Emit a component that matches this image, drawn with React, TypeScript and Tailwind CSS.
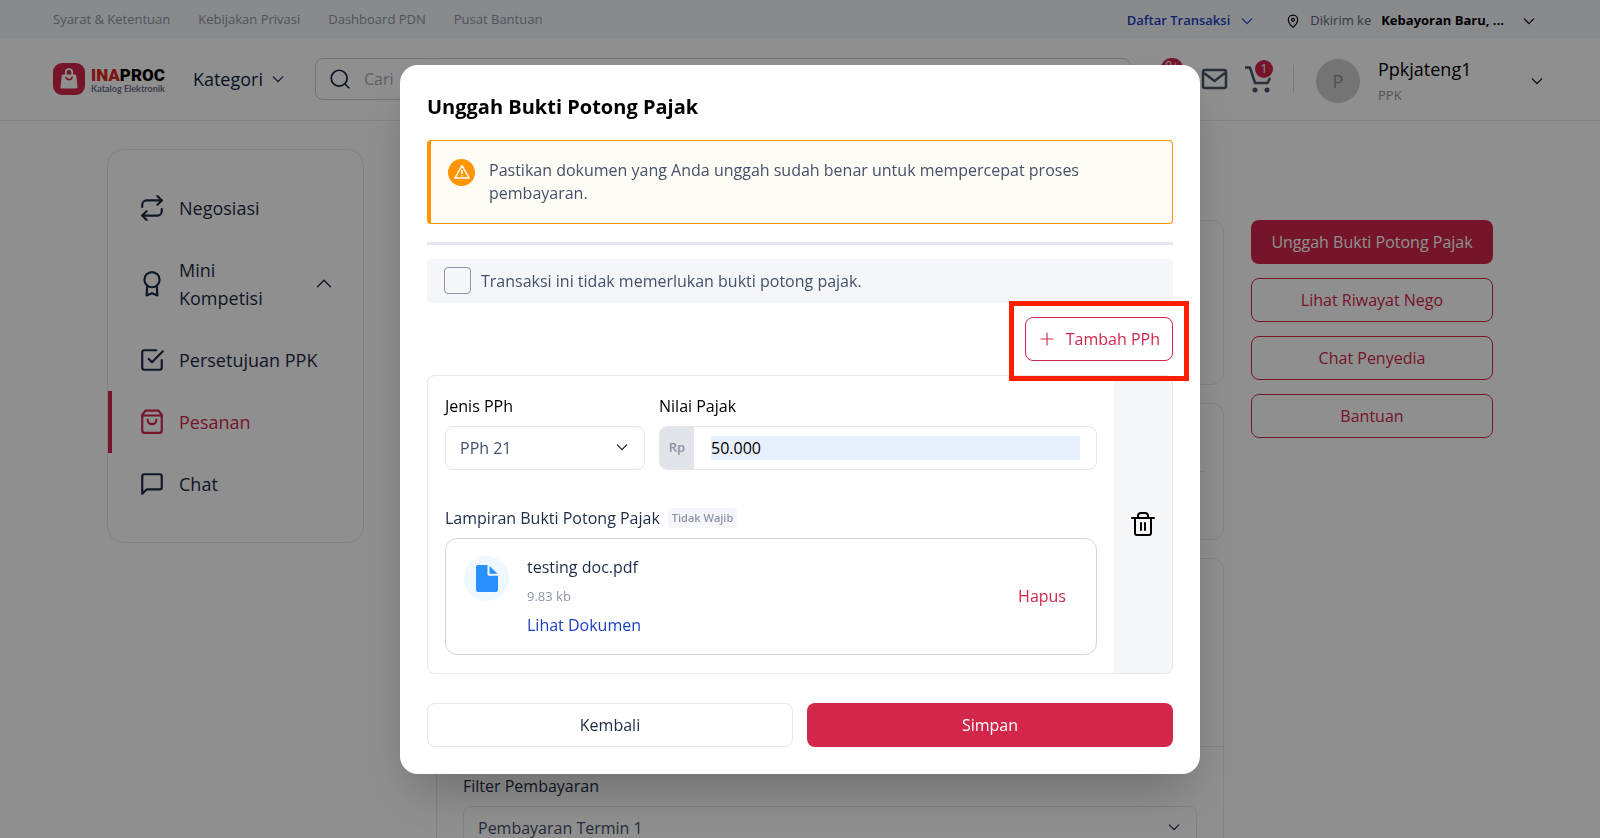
import React, { useState } from "react";

type IconProps = {
  className?: string;
  strokeWidth?: number;
  children: React.ReactNode;
};
function Icon({ className, strokeWidth = 2, children }: IconProps) {
  return (
    <svg
      viewBox="0 0 24 24"
      fill="none"
      stroke="currentColor"
      strokeWidth={strokeWidth}
      strokeLinecap="round"
      strokeLinejoin="round"
      aria-hidden="true"
      className={`shrink-0 ${className || ""}`}
    >
      {children}
    </svg>
  );
}

function ChevronDown({ className }: { className?: string }) {
  return (
    <Icon className={className}>
      <path d="m4 8.500 8 8 8-8" />
    </Icon>
  );
}

function Logo() {
  return (
    <a href="#" className="flex items-center gap-1.5">
      <svg viewBox="0 0 32 32" className="size-8 shrink-0" aria-hidden="true">
        <rect width="32" height="32" rx="9" fill="#d2264b" />
        <path
          d="M10 11.500h12c.7 0 1.100.4 1.200 1.100l1.300 11.500c.1.900-.4 1.400-1.300 1.400H8.800c-.9 0-1.400-.5-1.300-1.400l1.300-11.500c.1-.7.5-1.100 1.200-1.100z"
          fill="#fff"
        />
        <path
          d="M12.800 12V9.300a3.200 3.200 0 0 1 6.400 0V12"
          fill="none"
          stroke="#fff"
          strokeWidth="1.800"
        />
        <path
          d="M13 14.200a3.200 3.200 0 0 0 6.200 0"
          fill="none"
          stroke="#d2264b"
          strokeWidth="1.500"
          strokeLinecap="round"
        />
      </svg>
      <span className="flex flex-col">
        <span className="font-['Roboto',sans-serif] text-[17px] leading-5 font-black text-black">
          <span className="text-[#e1251b]">INA</span>PROC
        </span>
        <span className="font-['Lato',sans-serif] text-[9px] leading-2 font-bold text-gray-500">
          Katalog Elektronik
        </span>
      </span>
    </a>
  );
}

function TopBar() {
  return (
    <div className="flex h-[38px] items-center justify-between bg-[#f4f6fa] pr-16 pl-[53px] text-[13px] text-[#8d95a5]">
      <nav className="flex gap-7 pt-px">
        <a href="#">Syarat &amp; Ketentuan</a>
        <a href="#">Kebijakan Privasi</a>
        <a href="#">Dashboard PDN</a>
        <a href="#">Pusat Bantuan</a>
      </nav>
      <div className="flex items-center pt-1">
        <button className="flex items-center gap-2.5 font-semibold text-[#1b3fc4]">
          Daftar Transaksi
          <ChevronDown className="size-3.5" />
        </button>
        <button className="ml-8 flex items-center gap-2.5 text-[#596579]">
          <Icon className="size-3.5 text-black">
            <path d="M20 10c0 6-8 13-8 13s-8-7-8-13a8 8 0 0 1 16 0z" />
            <circle cx="12" cy="10" r="2.500" />
          </Icon>
          Dikirim ke
          <span className="font-bold text-black">Kebayoran Baru, ...</span>
          <ChevronDown className="ml-2 size-3.5 text-black" />
        </button>
      </div>
    </div>
  );
}

function Header() {
  return (
    <header className="flex h-[83px] items-center border-b border-gray-200 pr-14 pl-[53px]">
      <Logo />
      <button className="ml-7 flex items-center gap-2 text-lg font-medium text-[#0b1f3f]">
        Kategori
        <ChevronDown className="size-3.5" />
      </button>
      <label className="ml-[30px] flex h-[42px] flex-1 items-center gap-3.5 rounded-lg border border-[#c9ced6] px-3.5 text-[#0b1f3f]">
        <Icon className="size-5">
          <circle cx="11" cy="11" r="9.500" />
          <path d="m22.500 22.500-4.500-4.500" />
        </Icon>
        <input
          type="search"
          aria-label="Cari"
          placeholder="Cari"
          className="w-full text-base outline-none placeholder:text-[#a3abb9]"
        />
      </label>
      <div className="ml-[70px] flex items-center gap-4 pt-0.5 text-[#4a5568]">
        <button aria-label="Pesan" className="relative">
          <svg viewBox="0 0 28 28" className="size-7" fill="none" aria-hidden="true">
            <rect x="2" y="4" width="23" height="18" rx="2" stroke="currentColor" strokeWidth="2.500" />
            <path d="m3 7 10.500 8L24 7" stroke="currentColor" strokeWidth="2.500" />
          </svg>
          <span className="absolute -top-2 -left-10 h-5 w-[22px] rounded-full bg-[#d2264b] text-xs text-white">
            9+
          </span>
        </button>
        <button aria-label="Keranjang" className="relative">
          <svg viewBox="0 0 28 28" className="size-7" fill="none" aria-hidden="true">
            <path
              d="M0 1.500h5l5 15.500H22.500L25 12"
              stroke="currentColor"
              strokeWidth="2.500"
              strokeLinejoin="round"
            />
            <circle cx="10" cy="24" r="2.500" fill="currentColor" />
            <circle cx="22" cy="24" r="2.500" fill="currentColor" />
          </svg>
          <span className="absolute -top-1.5 left-2.5 size-[18px] rounded-full bg-[#d2264b] text-xs leading-[18px] text-white">
            1
          </span>
        </button>
      </div>
      <div className="ml-5 h-7 border-l border-gray-300" />
      <button className="ml-[22px] flex items-center pt-1 text-left">
        <span className="flex size-11 items-center justify-center rounded-full bg-[#cfcfcf] text-lg font-medium text-[#8f8f8f]">
          P
        </span>
        <span className="ml-[18px] flex w-[152px] flex-col">
          <span className="text-lg leading-7 font-medium text-black">
            Ppkjateng1
          </span>
          <span className="text-[13px] leading-6 text-[#8d95a5]">PPK</span>
        </span>
        <ChevronDown className="size-3.5 text-black" />
      </button>
    </header>
  );
}

type MenuItem = {
  label: string;
  icon: React.ReactNode;
  active?: boolean;
  expandable?: boolean;
};
const MENU: MenuItem[] = [
  {
    label: "Negosiasi",
    icon: (
      <>
        <path d="m17 1 4 4-4 4" />
        <path d="M3 11V9a4 4 0 0 1 4-4h14" />
        <path d="m7 23-4-4 4-4" />
        <path d="M21 13v2a4 4 0 0 1-4 4H3" />
      </>
    ),
  },
  {
    label: "Mini Kompetisi",
    expandable: true,
    icon: (
      <>
        <circle cx="12" cy="8" r="7" />
        <path d="M7.500 14.500 7 22.500l5-2 5 2-.5-8" />
      </>
    ),
  },
  {
    label: "Persetujuan PPK",
    icon: (
      <>
        <path d="m9 11 3 3L22 4" />
        <path d="M21 12v7a2 2 0 0 1-2 2H5a2 2 0 0 1-2-2V5a2 2 0 0 1 2-2h11" />
      </>
    ),
  },
  {
    label: "Pesanan",
    active: true,
    icon: (
      <>
        <path d="M6 1.500h12L21 5.500V20a2 2 0 0 1-2 2H5a2 2 0 0 1-2-2V5.500z" />
        <path d="M3 6h18" />
        <path d="M16 10a4 4 0 0 1-8 0" />
      </>
    ),
  },
  {
    label: "Chat",
    icon: (
      <path d="M21 15a2 2 0 0 1-2 2H7l-4 4V5a2 2 0 0 1 2-2h14a2 2 0 0 1 2 2z" />
    ),
  },
];

function Sidebar() {
  return (
    <nav className="w-[257px] rounded-2xl border border-gray-200 py-[27px]">
      {MENU.map(({ label, icon, active, expandable }) => (
        <a
          key={label}
          href="#"
          className={`flex items-center gap-3.5 border-l-4 py-[17px] pr-7 pl-[27px] text-lg leading-7 font-medium ${
            active
              ? "border-[#d2264b] text-[#d2264b]"
              : "border-transparent text-[#1c2b46]"
          }`}
        >
          <Icon className="size-[26px]">{icon}</Icon>
          <span className={expandable ? "w-24" : "whitespace-nowrap"}>
            {label}
          </span>
          {expandable && (
            <Icon className="ml-auto size-[22px]" strokeWidth={1.5}>
              <path d="m5 15 7-7 7 7" />
            </Icon>
          )}
        </a>
      ))}
    </nav>
  );
}

function OrderDetail() {
  return (
    <div className="flex min-w-0 flex-1 flex-col gap-[18px] pt-[71px]">
      <section className="h-[165px] rounded-xl border border-gray-200" />
      <section className="h-[137px] rounded-xl border border-gray-200 px-[18px] pt-[67px]">
        <hr className="border-gray-200" />
      </section>
      <section className="rounded-xl border border-gray-200">
        <div className="h-[188px] border-b border-gray-200" />
        <div className="flex flex-col gap-2 px-[26px] py-[27px]">
          <label
            htmlFor="filter"
            className="text-base leading-6 font-medium text-[#1c2b46]"
          >
            Filter Pembayaran
          </label>
          <div className="relative">
            <select
              id="filter"
              className="h-11 w-full appearance-none rounded-lg border border-gray-200 px-3.5 text-base text-[#44516a]"
            >
              <option>Pembayaran Termin 1</option>
            </select>
            <ChevronDown className="pointer-events-none absolute top-3.5 right-4 size-3.5 text-[#0b1f3f]" />
          </div>
        </div>
      </section>
    </div>
  );
}

function Actions() {
  return (
    <div className="flex w-[242px] flex-col gap-3.5 pt-[71px] text-base font-medium">
      <button className="h-11 rounded-lg bg-[#d2264b] text-white">
        Unggah Bukti Potong Pajak
      </button>
      {["Lihat Riwayat Nego", "Chat Penyedia", "Bantuan"].map((label) => (
        <button
          key={label}
          className="h-11 rounded-lg border border-[#d2264b] text-[#d2264b]"
        >
          {label}
        </button>
      ))}
    </div>
  );
}

function Alert() {
  return (
    <div className="flex items-start gap-3.5 rounded-[4px] border border-l-4 border-[#ff9500] bg-[#fffcf5] py-[18px] pr-10 pl-[17px]">
      <span className="flex size-[27px] shrink-0 items-center justify-center rounded-full bg-[#ff9500] text-white">
        <Icon className="size-[18px]">
          <path d="M12 3.500 2.500 20h19z" />
          <path d="M12 10v4M12 17v.1" />
        </Icon>
      </span>
      <p className="text-base leading-[23px] text-[#44516a]">
        Pastikan dokumen yang Anda unggah sudah benar untuk mempercepat proses
        pembayaran.
      </p>
    </div>
  );
}

function Attachment() {
  return (
    <div className="flex items-center rounded-xl border border-[#d0d5db] py-3.5 pr-[30px] pl-[18px]">
      <span className="mt-[3px] flex size-[45px] items-center justify-center self-start rounded-full bg-[#eff8ff]">
        <svg viewBox="0 0 22 27" className="h-[27px] w-[22px]" aria-hidden="true">
          <path
            d="M2 0h9.500v9.500c0 .8.400 1.200 1.200 1.200H22V25a2 2 0 0 1-2 2H2a2 2 0 0 1-2-2V2a2 2 0 0 1 2-2z"
            fill="#2990fb"
          />
          <path d="M13.500 1 21.500 8.700h-8z" fill="#2990fb" />
        </svg>
      </span>
      <div className="ml-[18px] flex flex-1 flex-col items-start">
        <span className="text-base leading-[29px] font-medium text-[#1c2b46]">
          testing doc.pdf
        </span>
        <span className="text-[13px] leading-[29px] text-[#8d95a5]">
          9.83 kb
        </span>
        <a
          href="#"
          className="text-base leading-[29px] font-medium text-[#1b3fc4]"
        >
          Lihat Dokumen
        </a>
      </div>
      <button className="text-base font-medium text-[#d2264b]">Hapus</button>
    </div>
  );
}

function TaxEntry() {
  const [amount, setAmount] = useState("50.000");

  return (
    <div className="mt-3.5 flex overflow-hidden rounded-lg border border-gray-200">
      <div className="flex flex-1 flex-col px-[17px] py-[18px]">
        <div className="flex gap-3.5">
          <div className="flex w-[200px] flex-col gap-2">
            <label
              htmlFor="jenis"
              className="text-base leading-6 font-medium text-black"
            >
              Jenis PPh
            </label>
            <div className="relative">
              <select
                id="jenis"
                className="h-11 w-full appearance-none rounded-lg border border-gray-200 px-3.5 text-base text-[#44516a]"
              >
                <option>PPh 21</option>
              </select>
              <ChevronDown className="pointer-events-none absolute top-3.5 right-4 size-3.5 text-[#0b1f3f]" />
            </div>
          </div>
          <div className="flex flex-1 flex-col gap-2">
            <label
              htmlFor="nilai"
              className="text-base leading-6 font-medium text-black"
            >
              Nilai Pajak
            </label>
            <div className="flex h-11 items-center overflow-hidden rounded-lg border border-gray-200 pr-4">
              <span className="flex h-full w-[34px] shrink-0 items-center justify-center bg-[#e1e5ea] text-[13px] font-semibold text-[#8d95a5]">
                Rp
              </span>
              <input
                id="nilai"
                type="text"
                value={amount}
                onChange={(e) => setAmount(e.target.value)}
                className="ml-[17px] h-6 w-full bg-[#e8effd] text-base text-black outline-none"
              />
            </div>
          </div>
        </div>

        <div className="mt-9 mb-2 flex items-center gap-2">
          <span className="text-base leading-6 font-medium text-[#1c2b46]">
            Lampiran Bukti Potong Pajak
          </span>
          <span className="rounded-[4px] bg-[#f4f6fa] px-1 text-[11px] leading-5 font-semibold text-[#8d95a5]">
            Tidak Wajib
          </span>
        </div>
        <Attachment />
      </div>

      <button
        aria-label="Hapus PPh"
        className="flex w-[58px] items-center justify-center bg-[#f4f6fa] text-black"
      >
        <Icon className="size-6">
          <path d="M1 6h22" />
          <path d="M7 6V4a3 3 0 0 1 3-3h4a3 3 0 0 1 3 3v2" />
          <path d="M4 6v15a2 2 0 0 0 2 2h12a2 2 0 0 0 2-2V6" />
          <path d="M10 11v7M14 11v7" />
        </Icon>
      </button>
    </div>
  );
}

function UploadDialog() {
  return (
    <div
      role="dialog"
      aria-modal="true"
      aria-labelledby="dialog-title"
      className="w-full max-w-[800px] rounded-[18px] bg-white p-[27px] shadow-2xl"
    >
      <h2
        id="dialog-title"
        className="mb-[18px] text-xl leading-[30px] font-bold text-black"
      >
        Unggah Bukti Potong Pajak
      </h2>
      <Alert />
      <hr className="mt-[18px] mb-3.5 border-t-[3px] border-[#e3e7eb]" />

      <label className="flex h-11 items-center gap-2.5 rounded-[4px] bg-[#f4f6fa] px-[17px] text-base text-[#44516a]">
        <input
          type="checkbox"
          className="size-[27px] appearance-none rounded-[4px] border border-[#8d95a5]"
        />
        Transaksi ini tidak memerlukan bukti potong pajak.
      </label>

      <div className="mt-3.5 flex justify-end">
        <div className="relative">
          <button className="flex h-11 items-center gap-2.5 rounded-lg border border-[#d2264b] px-3 text-base font-medium text-[#d2264b]">
            <Icon className="size-[18px]" strokeWidth={1.5}>
              <path d="M4 12h16M12 4v16" />
            </Icon>
            Tambah PPh
          </button>
          {/* Highlight around the button */}
          <div className="pointer-events-none absolute -inset-x-4 -top-4 -bottom-5 z-10 border-[5px] border-[#ff1e00]" />
        </div>
      </div>

      <TaxEntry />

      <div className="mt-[29px] grid grid-cols-2 gap-3.5 text-base font-medium">
        <button className="h-11 rounded-lg border border-gray-200 text-[#1c2b46]">
          Kembali
        </button>
        <button className="h-11 rounded-lg bg-[#d2264b] text-white">
          Simpan
        </button>
      </div>
    </div>
  );
}

export default function App(): React.ReactNode {
  return (
    <div className="h-screen overflow-hidden bg-white font-['Open_Sans',sans-serif]">
      <TopBar />
      <Header />
      <main className="flex items-start px-[107px] pt-7">
        <Sidebar />
        <div className="ml-[72px] flex min-w-0 flex-1 gap-[27px]">
          <OrderDetail />
          <Actions />
        </div>
      </main>

      <div className="fixed inset-0 flex items-center justify-center bg-black/44">
        <UploadDialog />
      </div>
    </div>
  );
}
